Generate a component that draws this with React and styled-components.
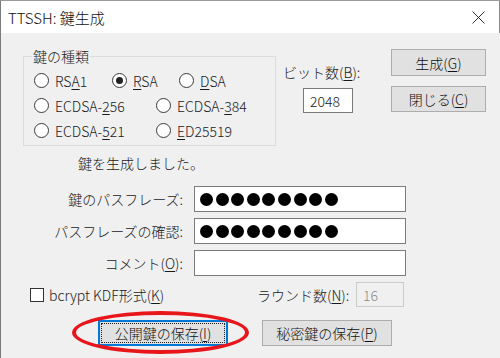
import React from "react";
import styled, { createGlobalStyle } from "styled-components";

const Global = createGlobalStyle`
  body { margin: 0; background: #fff; }
  * { box-sizing: border-box; }
`;

const Window = styled.div`
  position: relative;
  width: 500px;
  height: 358px;
  background: #f0f0f0;
  border-left: 1px solid #7a7a7a;
  border-top: 1px solid #9a9a9a;
  overflow: hidden;
  font-family: "Noto Sans CJK JP", "Noto Sans", sans-serif;
  font-size: 14px;
  font-weight: 300;
  color: #1a1a1a;
`;

const TitleBar = styled.div`
  height: 32px;
  background: #fff;
  display: flex;
  align-items: center;
  justify-content: space-between;
  padding: 0 14px 0 7px;
  font-size: 15px;
  border-right: 1px solid #8a8a8a;
  color: #111;
`;

const Body = styled.div`
  padding: 14px 14px 0 22px;
`;

const Top = styled.div`
  display: flex;
  align-items: flex-start;
`;

const Group = styled.fieldset`
  margin: 0;
  padding: 3px 0 2px 8px;
  border: 1px solid #dcdcdc;
  width: 253px;
  min-width: 0;
`;

const Legend = styled.legend`
  padding: 0 1px;
  line-height: 18px;
`;

const RadioRow = styled.div`
  display: flex;
  align-items: center;
  height: 25px;
  margin-left: 2px;
`;

const RadioItem = styled.label`
  display: flex;
  align-items: center;
  gap: 6px;
  line-height: 18px;
  width: ${(p) => (p.w ? `${p.w}px` : "auto")};
`;

const Circle = styled.span`
  width: 15px;
  height: 15px;
  border-radius: 50%;
  border: 1px solid #3a3a3a;
  background: #fff;
  display: flex;
  align-items: center;
  justify-content: center;
  &::after {
    content: "";
    width: 7px;
    height: 7px;
    border-radius: 50%;
    background: ${(p) => (p.on ? "#222" : "transparent")};
  }
`;

const U = styled.u`
  text-underline-offset: 2px;
`;

const BitCol = styled.div`
  margin-left: 7px;
  padding-top: 16px;
  display: flex;
  flex-direction: column;
  align-items: flex-start;
`;

const Label = styled.div`
  line-height: 18px;
  text-align: ${(p) => p.align || "left"};
  align-self: center;
`;

const SmallBox = styled.div`
  margin-top: 7px;
  margin-left: 20px;
  width: 50px;
  height: 25px;
  background: #fff;
  border: 1px solid #7a7a7a;
  display: flex;
  align-items: center;
  padding-left: 6px;
  line-height: 18px;
`;

const ButtonCol = styled.div`
  margin-left: auto;
  margin-top: 2px;
  display: flex;
  flex-direction: column;
  gap: 10px;
`;

const Button = styled.button`
  width: ${(p) => p.w || 95}px;
  height: ${(p) => p.h || 26}px;
  background: #e1e1e1;
  border: 1px solid #adadad;
  font: inherit;
  color: #111;
  padding: 0;
  line-height: 18px;
  ${(p) =>
    p.primary &&
    `
    border-color: #0078d7;
    box-shadow: inset 0 0 0 1px #0078d7;
    outline: 1px dotted #222;
    outline-offset: -4px;
  `}
`;

const Status = styled.div`
  margin: 8px 0 0 55px;
  line-height: 18px;
`;

const FormGrid = styled.div`
  margin-top: 14px;
  display: grid;
  grid-template-columns: 160px 212px;
  column-gap: 11px;
  row-gap: 6px;
`;

const TextBox = styled.div`
  height: 26px;
  background: #fff;
  border: 1px solid #7a7a7a;
  display: flex;
  align-items: center;
  padding-left: 5px;
  gap: 2.6px;
`;

const Dot = styled.span`
  width: 13px;
  height: 13px;
  border-radius: 50%;
  background: #000;
`;

const OptionsRow = styled.div`
  margin-top: 6px;
  height: 25px;
  display: flex;
  align-items: center;
`;

const CheckLabel = styled.label`
  margin-left: 7px;
  width: 227px;
  display: flex;
  align-items: center;
  gap: 5px;
  line-height: 18px;
`;

const Check = styled.span`
  width: 14px;
  height: 14px;
  border: 1px solid #333;
  background: #fff;
`;

const RoundLabel = styled.div`
  width: 99px;
  line-height: 18px;
`;

const DisabledBox = styled.div`
  width: 48px;
  height: 25px;
  border: 1px solid #cccccc;
  background: #f0f0f0;
  color: #8a8a8a;
  display: flex;
  align-items: center;
  padding-left: 6px;
`;

const BottomRow = styled.div`
  margin: 13px 0 0 75px;
  display: flex;
  gap: 34px;
`;

const Highlight = styled.div`
  position: absolute;
  left: 71px;
  top: 310px;
  width: 177px;
  height: 43px;
  border: 4px solid #e8161b;
  border-radius: 50%;
  pointer-events: none;
`;

const Dots = ({ n }) => (
  <>
    {Array.from({ length: n }).map((_, i) => (
      <Dot key={i} />
    ))}
  </>
);

export default function App() {
  return (
    <>
      <Global />
      <Window>
        <TitleBar>
          <span>TTSSH: 鍵生成</span>
          <svg width="13" height="13" viewBox="0 0 13 13">
            <path d="M0.5 0.5 L12.5 12.5 M12.5 0.5 L0.5 12.5" stroke="#333" strokeWidth="1" fill="none" />
          </svg>
        </TitleBar>
        <Body>
          <Top>
            <Group>
              <Legend>鍵の種類</Legend>
              <RadioRow>
                <RadioItem w={78}>
                  <Circle />
                  <span>RS<U>A</U>1</span>
                </RadioItem>
                <RadioItem w={67}>
                  <Circle on />
                  <span><U>R</U>SA</span>
                </RadioItem>
                <RadioItem>
                  <Circle />
                  <span><U>D</U>SA</span>
                </RadioItem>
              </RadioRow>
              <RadioRow>
                <RadioItem w={122}>
                  <Circle />
                  <span>ECDSA-<U>2</U>56</span>
                </RadioItem>
                <RadioItem>
                  <Circle />
                  <span>ECDSA-<U>3</U>84</span>
                </RadioItem>
              </RadioRow>
              <RadioRow>
                <RadioItem w={122}>
                  <Circle />
                  <span>ECDSA-<U>5</U>21</span>
                </RadioItem>
                <RadioItem>
                  <Circle />
                  <span><U>E</U>D25519</span>
                </RadioItem>
              </RadioRow>
            </Group>
            <BitCol>
              <Label>ビット数(<U>B</U>):</Label>
              <SmallBox>2048</SmallBox>
            </BitCol>
            <ButtonCol>
              <Button h={27}>生成(<U>G</U>)</Button>
              <Button h={26}>閉じる(<U>C</U>)</Button>
            </ButtonCol>
          </Top>
          <Status>鍵を生成しました。</Status>
          <FormGrid>
            <Label align="right">鍵のパスフレーズ:</Label>
            <TextBox><Dots n={9} /></TextBox>
            <Label align="right">パスフレーズの確認:</Label>
            <TextBox><Dots n={9} /></TextBox>
            <Label align="right">コメント(<U>O</U>):</Label>
            <TextBox />
          </FormGrid>
          <OptionsRow>
            <CheckLabel>
              <Check />
              <span>bcrypt KDF形式(<U>K</U>)</span>
            </CheckLabel>
            <RoundLabel>ラウンド数(<U>N</U>):</RoundLabel>
            <DisabledBox>16</DisabledBox>
          </OptionsRow>
          <BottomRow>
            <Button w={130} primary>公開鍵の保存(<U>I</U>)</Button>
            <Button w={130}>秘密鍵の保存(<U>P</U>)</Button>
          </BottomRow>
        </Body>
        <Highlight />
      </Window>
    </>
  );
}
